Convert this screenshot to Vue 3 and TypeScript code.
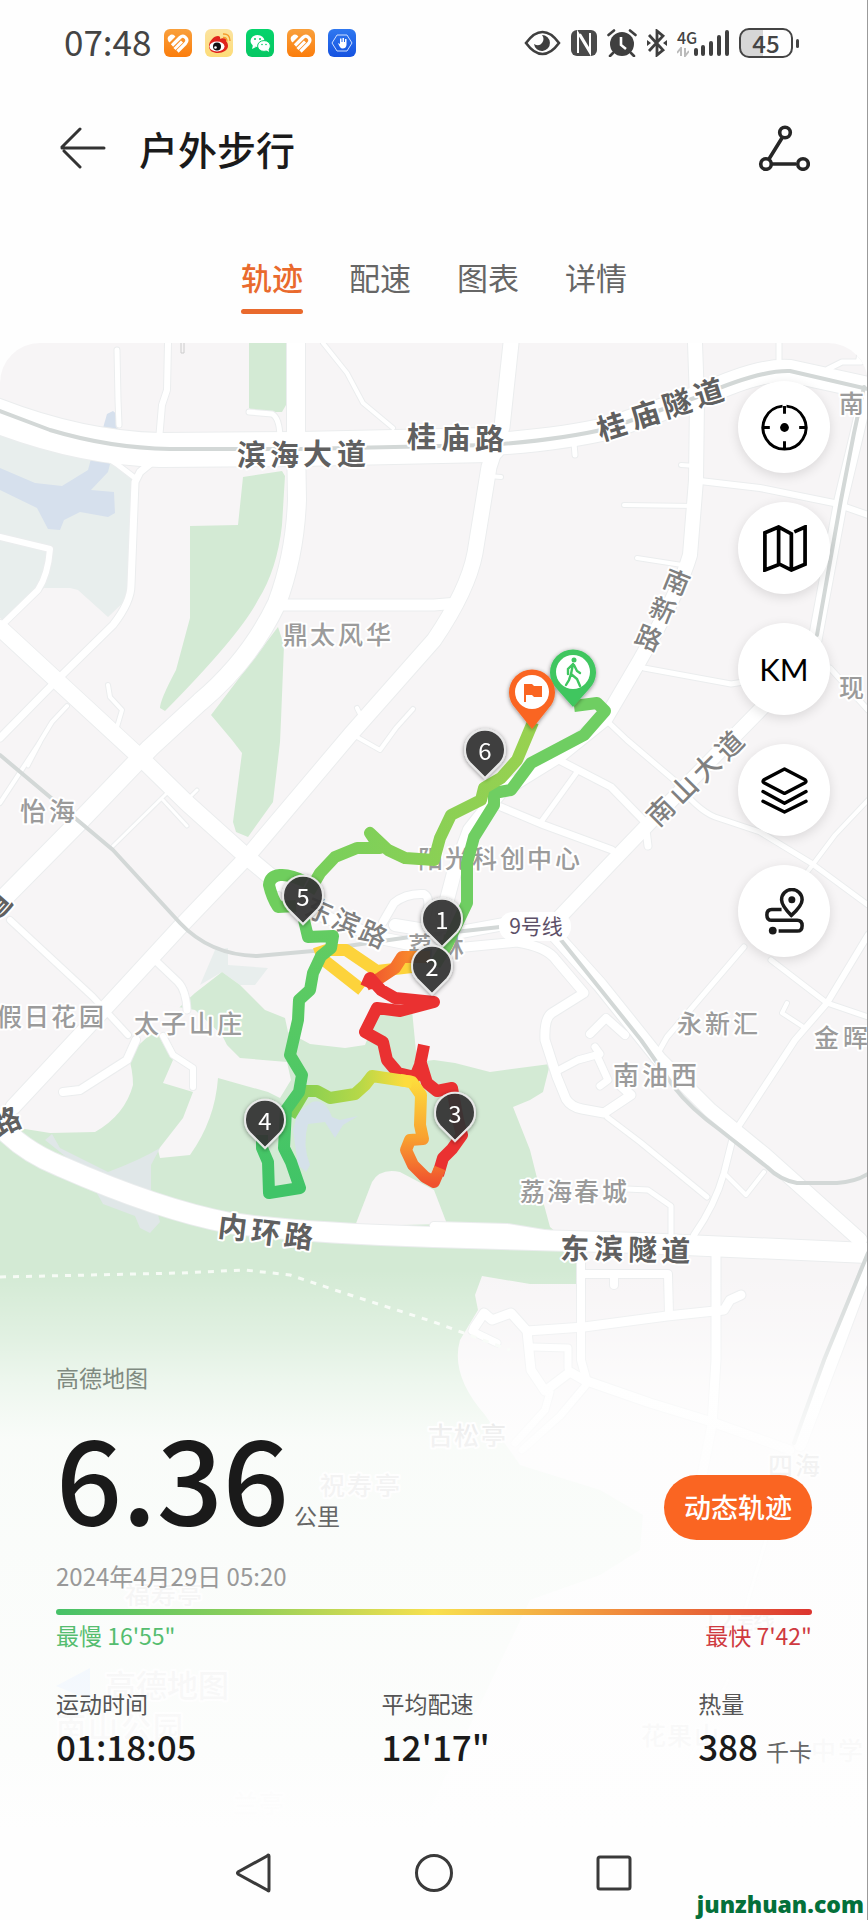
<script setup lang="ts">
import { ref } from 'vue'

interface Road { d: string; w: number }
interface MapLabel {
  text: string
  from: [number, number]
  to: [number, number]
  turn: number
  size: number
  kind: string
}
interface Pin { n: number; x: number; y: number }

const tabs = ['轨迹', '配速', '图表', '详情']
const activeTab = ref(0)

const roads: Road[] = [
  { w: 5, d: 'M117 350 118 400 119 425' },
  { w: 6, d: 'M168 343 167 390 162 405 159 440' },
  { w: 4, d: 'M323 343 347 373 363 403 393 428' },
  { w: 7, d: 'M157 458 140 472 135 482 131 585Q131 602 113 625L60 677 0 738' },
  { w: 4, d: 'M67 706 52 722 38 745 0 803' },
  { w: 6, d: 'M0 537 50 549Q48 575 38 590L5 622' },
  { w: 5, d: 'M92 448 118 465 135 478' },
  { w: 5, d: 'M249 412 272 414Q280 418 280 440' },
  { w: 4, d: 'M108 685 110 697 122 710 117 727' },
  { w: 3, d: 'M40 743 28 766M167 793 113 846M163 800 187 826M197 790 183 804' },
  { w: 6, d: 'M10 920 93 997 128 1035' },
  { w: 7, d: 'M157 962 178 982Q186 990 187 1010' },
  { w: 4, d: 'M357 708 364 722M413 709 396 728 380 750 357 737' },
  { w: 6, d: 'M700 481 760 488 834 503 868 515' },
  { w: 4, d: 'M624 505 695 506M637 558 682 565M681 465 696 466M489 476 501 477' },
  { w: 5, d: 'M644 668 731 684 830 668 868 710M779 343V370M574 443 575 455' },
  { w: 5, d: 'M828 369 842 362 861 362M856 343Q862 352 858 362' },
  { w: 5, d: 'M608 722 627 740 674 780 Q697 810 715 817L760 832 811 863 868 905' },
  { w: 7, d: 'M555 758 611 787 645 822 648 846' },
  { w: 5, d: 'M577 772 541 822' },
  { w: 7, d: 'M501 807 544 825 612 850' },
  { w: 4, d: 'M868 800 835 835 805 875' },
  { w: 5, d: 'M771 960 827 1003 868 1017M744 947 667 1037 654 1060' },
  { w: 6, d: 'M868 935 827 1003 795 1040 734 1133 724 1173Q715 1205 694 1235' },
  { w: 4, d: 'M787 1003 782 1013 802 1026' },
  { w: 9, d: 'M455 948 517 942Q547 947 556 960L584 993 552 1013Q544 1018 545 1040L557 1077 566 1099Q571 1107 582 1109L604 1113 631 1095 620 1085' },
  { w: 7, d: 'M557 1071 578 1060 600 1054 595 1047M598 1058 608 1080 600 1086' },
  { w: 8, d: 'M590 1034 606 1018 625 1035' },
  { w: 5, d: 'M607 1117 640 1142 707 1197' },
  { w: 5, d: 'M627 1189 648 1190 671 1206V1234' },
  { w: 4, d: 'M724 1173 746 1195 764 1172' },
  { w: 8, d: 'M434 1226 507 1228 550 1235' },
  { w: 8, d: 'M581 1253V1360L587 1382' },
  { w: 8, d: 'M584 1274H668L669 1315M614 1275V1285' },
  { w: 9, d: 'M527 1331 584 1327 667 1316 724 1310 730 1300 741 1295' },
  { w: 9, d: 'M716 1253V1360L712 1425 702 1475' },
  { w: 9, d: 'M474 1328 484 1313 492 1320 511 1313 527 1331 531 1370 545 1391 570 1372 584 1380 650 1403 712 1422 790 1450' },
  { w: 7, d: 'M472 1331 497 1343M532 1347 568 1348V1368' },
  { w: 7, d: 'M586 1385 560 1416 522 1450M550 1392 545 1410 515 1443' },
  { w: 8, d: 'M136 1040 127 1060 80 1090 63 1092' },
  { w: 6, d: 'M163 1036 173 1055 193 1068V1087' },
  { w: 8, d: 'M383 922 394 903Q406 893 424 894 432 898 425 920' },
  { w: 12, d: 'M273 878 320 915 380 938 440 950M395 925 450 934 515 922' },
  { w: 34, d: 'M-5 415Q80 448 160 450L300 449 489 445' },
  { w: 22, d: 'M480 445Q560 440 610 428L700 396Q760 368 790 371L868 388' },
  { w: 18, d: 'M296 343 296 440 297 500Q295 555 277 603 250 660 200 702L150 748 78 823 0 902' },
  { w: 16, d: 'M0 628 143 760 187 803 247 857 278 883' },
  { w: 15, d: 'M511 343 502 427 489 467 475 553Q468 590 434 640L350 735 247 857 180 927 110 1003 13 1107' },
  { w: 11, d: 'M278 605H434L458 603' },
  { w: 14, d: 'M695 343 697 400 696 480 690 555Q680 590 640 660L606 718 560 755 500 792 470 830 454 873 443 915' },
  { w: 14, d: 'M555 922 611 863 660 812 760 710 815 655' },
  { w: 13, d: 'M868 385 857 433 841 500 815 640' },
  { w: 14, d: 'M555 935 600 985 660 1060 710 1110 765 1155 860 1240' },
  { w: 12, d: 'M868 1265 840 1340 800 1445' },
  { w: 20, d: 'M-5 1120Q20 1150 60 1166 160 1210 230 1223 300 1233 434 1237L640 1243 868 1253' },
  { w: 3, d: 'M769 1530 745 1610M728 1680 690 1760' },
]

const rails = [
  'M0 411 50 430Q110 448 170 449L300 449 489 445Q560 440 610 428L700 396Q760 370 790 371L868 389',
  'M864 387 854 433 841 500 817 635',
  'M0 755 50 797 113 850 180 923Q210 955 257 956L313 951 410 937 500 927',
  'M561 940 641 1040 674 1087Q690 1108 720 1130L767 1167Q780 1180 797 1183H837Q855 1182 868 1174',
  'M868 1253 824 1360 794 1443',
]

const labels: MapLabel[] = [
  { text: '滨海大道', from: [251, 455], to: [351, 454], turn: 0, size: 29, kind: 'strong' },
  { text: '桂庙路', from: [421, 437], to: [489, 439], turn: 0, size: 29, kind: 'strong' },
  { text: '桂庙隧道', from: [612, 426], to: [709, 392], turn: -17, size: 29, kind: 'strong' },
  { text: '南新路', from: [677, 582], to: [649, 638], turn: 22, size: 26, kind: 'road' },
  { text: '南山大道', from: [660, 811], to: [729, 745], turn: -45, size: 27, kind: 'road' },
  { text: '东滨路', from: [320, 910], to: [374, 934], turn: 24, size: 27, kind: 'road' },
  { text: '东滨隧道', from: [575, 1248], to: [676, 1250], turn: 1, size: 29, kind: 'strong' },
  { text: '内环路', from: [233, 1227], to: [299, 1236], turn: 7, size: 29, kind: 'strong' },
  { text: '路', from: [6, 1121], to: [6, 1121], turn: -24, size: 29, kind: 'strong' },
  { text: '道', from: [-4, 906], to: [-4, 906], turn: -48, size: 29, kind: 'strong' },
  { text: '鼎太风华', from: [295, 634], to: [378, 634], turn: 0, size: 25, kind: 'place' },
  { text: '怡海', from: [33, 811], to: [62, 811], turn: 0, size: 26, kind: 'place' },
  { text: '假日花园', from: [9, 1016], to: [91, 1016], turn: 0, size: 25, kind: 'place' },
  { text: '太子山庄', from: [146, 1023], to: [229, 1023], turn: 0, size: 25, kind: 'place' },
  { text: '阳光科创中心', from: [430, 858], to: [567, 858], turn: 0, size: 25, kind: 'place' },
  { text: '荔林', from: [421, 946], to: [451, 947], turn: 0, size: 26, kind: 'place' },
  { text: '永新汇', from: [689, 1023], to: [745, 1023], turn: 0, size: 25, kind: 'place' },
  { text: '金晖', from: [826, 1037], to: [855, 1037], turn: 0, size: 25, kind: 'place' },
  { text: '南油西', from: [626, 1075], to: [684, 1075], turn: 0, size: 26, kind: 'place' },
  { text: '荔海春城', from: [532, 1191], to: [614, 1191], turn: 0, size: 25, kind: 'place' },
  { text: '南', from: [851, 403], to: [851, 403], turn: 0, size: 25, kind: 'place' },
  { text: '现', from: [851, 687], to: [851, 687], turn: 0, size: 25, kind: 'place' },
  { text: '古松亭', from: [440, 1435], to: [493, 1435], turn: 0, size: 25, kind: 'place' },
  { text: '四海', from: [780, 1465], to: [807, 1465], turn: 0, size: 25, kind: 'place' },
  { text: '祝寿亭', from: [332, 1485], to: [387, 1485], turn: 0, size: 25, kind: 'place' },
  { text: '福寿亭', from: [137, 1594], to: [189, 1594], turn: 0, size: 25, kind: 'place' },
  { text: '12号线', from: [715, 1620], to: [764, 1620], turn: 0, size: 22, kind: 'place' },
  { text: '高德地图', from: [120, 1685], to: [213, 1685], turn: 0, size: 31, kind: 'place' },
  { text: '南山公园', from: [71, 1727], to: [168, 1727], turn: 0, size: 30, kind: 'place' },
  { text: '花果山', from: [653, 1735], to: [706, 1735], turn: 0, size: 25, kind: 'place' },
  { text: '中学', from: [823, 1750], to: [850, 1750], turn: 0, size: 25, kind: 'place' },
  { text: '兰亭', from: [245, 1803], to: [271, 1803], turn: 0, size: 25, kind: 'place' },
]

// Glyph centres are spread evenly from `from` to `to`; each origin is then turned round its centre.
function glyphs(label: MapLabel) {
  const chars = Array.from(label.text)
  const rad = (label.turn * Math.PI) / 180
  const a = label.size / 2
  const b = -label.size * 0.38
  const dx = a * Math.cos(rad) - b * Math.sin(rad)
  const dy = a * Math.sin(rad) + b * Math.cos(rad)
  return chars.map((char, i) => {
    const t = chars.length > 1 ? i / (chars.length - 1) : 0
    return {
      char,
      x: Math.round(label.from[0] + (label.to[0] - label.from[0]) * t - dx),
      y: Math.round(label.from[1] + (label.to[1] - label.from[1]) * t - dy),
    }
  })
}

const placedLabels = labels.map((label) => ({ ...label, glyphs: glyphs(label) }))

const pins: Pin[] = [
  { n: 6, x: 485, y: 752 },
  { n: 5, x: 303, y: 898 },
  { n: 1, x: 442, y: 921 },
  { n: 2, x: 432, y: 968 },
  { n: 3, x: 455, y: 1115 },
  { n: 4, x: 265, y: 1122 },
]

const stats = [
  { label: '运动时间', value: '01:18:05', unit: '' },
  { label: '平均配速', value: '12\'17"', unit: '' },
  { label: '热量', value: '388', unit: '千卡' },
]
</script>

<template>
  <div class="page">
    <header class="status">
      <div class="status-left">
        <span class="clock">07:48</span>
        <svg v-for="n in 5" :key="n" class="app" viewBox="0 0 28 28" aria-hidden="true">
          <defs>
            <linearGradient :id="'app' + n" x1="0" y1="0" x2="0" y2="1">
              <stop offset="0" :stop-color="['#f9a03c', '#fbe3a0', '#06d46c', '#f9a03c', '#2f78f0'][n - 1]" />
              <stop offset="1" :stop-color="['#fb7d0c', '#fddc78', '#06c763', '#fb7d0c', '#1552e0'][n - 1]" />
            </linearGradient>
          </defs>
          <rect width="28" height="28" rx="6" :fill="`url(#app${n})`" />
          <g v-if="n === 1 || n === 4" fill="none" stroke="#fff" stroke-width="3.2" stroke-linejoin="round">
            <path d="M8 16.500 16 8.500Q18.500 6 21 8 24.500 11 21.500 14.500L13.500 22.500" />
            <path d="M10.500 20 18 12.500" stroke-width="3" />
            <path d="M5.500 12.500Q3 9 6 7 8 5.500 10.500 7.500Z" fill="#fff" stroke-width="1.500" />
          </g>
          <g v-else-if="n === 2">
            <path d="M4 17C4 12 9 7 13 7c3 0 2 3 2 3s6-2 6 1c0 2 2 2 2 6s-5 7-10 7-9-2-9-7Z" fill="#e0241c" />
            <ellipse cx="12" cy="17.500" rx="7.500" ry="5" fill="#fff" />
            <circle cx="12" cy="17.500" r="4" fill="#111" />
            <circle cx="10.500" cy="18.500" r="1.300" fill="#fff" />
            <path d="M18 8.500q4-.500 4 4M18 5q7-.500 7 7" fill="none" stroke="#f39a2b" stroke-width="1.400" />
          </g>
          <g v-else-if="n === 3" fill="#fff">
            <ellipse cx="11.500" cy="12" rx="7" ry="6" />
            <path d="m7 16-1 4 4-2Z" />
            <ellipse cx="18" cy="17" rx="6.400" ry="5.400" stroke="#06cc66" stroke-width="1" />
            <path d="m20 21 3 2-.500-3Z" />
            <g fill="#06cc66">
              <circle cx="9" cy="10" r="1" /><circle cx="14" cy="10" r="1" />
              <circle cx="16" cy="15.500" r=".8" /><circle cx="20" cy="15.500" r=".8" />
            </g>
          </g>
          <g v-else>
            <path d="m9 6h10l5 8-5 8H9l-5-8Z" fill="none" stroke="#cfe0ff" stroke-width="1" />
            <path d="M10 14l2 1V9.500h1.500V13h1V9h1.500v4h1v-3h1.500v6q-.500 3.500-4 3.500-2.500 0-4.500-5.500Z" fill="#fff" />
          </g>
        </svg>
      </div>
      <div class="status-right">
        <svg class="s-eye" viewBox="0 0 37 26" aria-hidden="true">
          <path d="M2 13Q10 2 18.500 2T35 13Q27 24 18.500 24T2 13Z" fill="none" stroke="#3f3f3f" stroke-width="2.600" />
          <path d="M18 5a8 8 0 1 1-8 9q5 3 8-1t0-8Z" fill="#3f3f3f" />
        </svg>
        <svg class="s-nfc" viewBox="0 0 26 28" aria-hidden="true">
          <rect y="1" width="26" height="26" rx="6" fill="#4a4a4a" />
          <path d="M7 24V4L19 24V4" fill="none" stroke="#fff" stroke-width="2" />
          <path d="M9 5 18 20" stroke="#fff" stroke-width="2" />
        </svg>
        <svg class="s-alarm" viewBox="0 0 30 28" aria-hidden="true">
          <circle cx="15" cy="15" r="12" fill="#3f3f3f" />
          <path d="M1.500 6 7 1.500M28.500 6 23 1.500M6 24l-3 3M24 24l3 3" stroke="#3f3f3f" stroke-width="2.600" stroke-linecap="round" />
          <path d="M14 8v8l5 4" fill="none" stroke="#fff" stroke-width="2.600" />
        </svg>
        <svg class="s-bt" viewBox="0 0 20 28" aria-hidden="true">
          <path d="M2 6 16 21l-6 5V2l6 5L2 22" fill="none" stroke="#3f3f3f" stroke-width="2.800" />
          <path d="M0 11l4 3-4 3ZM20 11l-4 3 4 3Z" fill="#3f3f3f" />
        </svg>
        <div class="cell">
          <div class="cell-net">
            <span class="net">4G</span>
            <svg class="s-arrows" viewBox="0 0 12 10" aria-hidden="true">
              <path d="M4 9V1L0 6M8 1v8l4-5" fill="none" stroke="#bbb" stroke-width="2" />
            </svg>
          </div>
          <svg class="s-signal" viewBox="0 0 36 28" aria-hidden="true">
            <path d="M3 21v4M10 18v7M18 14v11M26 8v17M34 3v22" stroke="#3f3f3f" stroke-width="4" stroke-linecap="round" />
          </svg>
        </div>
        <div class="battery"><span class="battery-body">45</span><i class="battery-tip"></i></div>
      </div>
    </header>

    <div class="title-bar">
      <button class="plain" type="button" aria-label="返回">
        <svg class="i-back" viewBox="0 0 46 42" aria-hidden="true">
          <path d="M44 21H2M20 2 2 20M4 24 20 40" fill="none" stroke="#333" stroke-width="3" stroke-linecap="round" />
        </svg>
      </button>
      <h1>户外步行</h1>
      <button class="plain share" type="button" aria-label="分享">
        <svg class="i-share" viewBox="0 0 52 46" aria-hidden="true">
          <g fill="none" stroke="#262626" stroke-width="3.600">
            <path d="M11 34 24 13M13 39h25" />
            <circle cx="27" cy="7.500" r="5.300" /><circle cx="8" cy="39" r="5.300" /><circle cx="45" cy="39" r="5.300" />
          </g>
        </svg>
      </button>
    </div>

    <nav class="tabs" role="tablist">
      <button
        v-for="(tab, i) in tabs"
        :key="tab"
        class="tab"
        :class="{ active: i === activeTab }"
        type="button"
        role="tab"
        :aria-selected="i === activeTab"
        @click="activeTab = i"
      >{{ tab }}</button>
    </nav>

    <main class="panel">
      <svg class="map" viewBox="0 343 868 1487" role="img" aria-label="运动轨迹地图">
        <defs>
          <linearGradient id="fade" x1="0" y1="1270" x2="0" y2="1830" gradientUnits="userSpaceOnUse">
            <stop offset="0" stop-color="#fff" stop-opacity="0" />
            <stop offset=".12" stop-color="#fff" stop-opacity=".32" />
            <stop offset=".2" stop-color="#fff" stop-opacity=".6" />
            <stop offset=".3" stop-color="#fefefe" stop-opacity=".88" />
            <stop offset=".6" stop-color="#fefefe" stop-opacity=".92" />
            <stop offset=".85" stop-color="#fefefe" stop-opacity=".95" />
            <stop offset="1" stop-color="#fefefe" />
          </linearGradient>
          <linearGradient id="warm" x1="0" y1="1080" x2="0" y2="1184" gradientUnits="userSpaceOnUse">
            <stop offset="0" stop-color="#fddc3c" />
            <stop offset=".55" stop-color="#f9a230" />
            <stop offset="1" stop-color="#f0512e" />
          </linearGradient>
          <linearGradient id="lime" x1="290" y1="0" x2="405" y2="0" gradientUnits="userSpaceOnUse">
            <stop offset="0" stop-color="#7ccd55" />
            <stop offset=".6" stop-color="#b5d848" />
            <stop offset="1" stop-color="#fddc3c" />
          </linearGradient>
          <linearGradient id="rise" x1="0" y1="1190" x2="0" y2="930" gradientUnits="userSpaceOnUse">
            <stop offset="0" stop-color="#40c467" />
            <stop offset="1" stop-color="#63cc62" />
          </linearGradient>
          <linearGradient id="last" x1="300" y1="0" x2="532" y2="0" gradientUnits="userSpaceOnUse">
            <stop offset="0" stop-color="#76cf5c" />
            <stop offset="1" stop-color="#98d150" />
          </linearGradient>
          <linearGradient id="amber" x1="370" y1="0" x2="425" y2="0" gradientUnits="userSpaceOnUse">
            <stop offset="0" stop-color="#f0552e" />
            <stop offset="1" stop-color="#fb9a2a" />
          </linearGradient>
          <filter id="drop" x="-30%" y="-30%" width="160%" height="160%">
            <feDropShadow dx="0" dy="1" stdDeviation="2" flood-opacity=".45" />
          </filter>
        </defs>

        <rect y="343" width="868" height="1487" fill="#f7f5f6" />
        <path fill="#e8eeed" d="M0 430 100 452 135 478 131 595 108 617 78 590 70 588H44L5 622 0 618Z" />
        <path fill="#e8eeed" d="M200 985 215 950 228 948V965L268 968 255 985 240 985 222 972Z" />
        <g fill="#d6e0ed">
          <path d="M0 468 35 483 62 486 88 470 92 455 111 460 108 472 91 490 114 492 115 513 108 517 80 512 64 520 60 530 48 529 37 508 0 490Z" />
          <path d="M103 428 107 414 113 411 120 417 116 436Z" />
        </g>
        <g fill="#d3ead4">
          <path d="M249 343H287L286 405 282 412 253 412 249 408Z" />
          <path d="M243 477 282 471 285 476 282 525Q277 570 258 600 240 635 165 711L160 708Q160 700 176 670L190 618V526L238 525Z" />
          <path d="M278 627 284 645 281 720 280 742 273 802 248 837 236 832 233 822 242 753 232 740 211 715Z" />
          <path d="M195 993 222 972 240 985 265 1010 285 1018 288 1032 310 1044 345 1048 365 1045 371 1030 378 1005 412 1010 417 1062 434 1060 455 1063 490 1072 550 1064 543 1092 530 1100 513 1107 530 1150 540 1190 550 1227 581 1253V1284H530L482 1276 475 1295 478 1310 460 1340Q450 1375 485 1415L520 1465 600 1490 643 1515 640 1550 600 1575 530 1600 420 1830H0V1125L50 1133 95 1132Q125 1115 133 1085 133 1070 128 1055Z" />
        </g>
        <path fill="#f7f5f6" d="M140 1000 195 1010 222 1035 227 1045 240 1058 287 1062 291 1080 280 1098 268 1092 218 1078Q215 1120 190 1155L160 1158 158 1150 183 1118 193 1092 163 1083 173 1060 160 1035 140 1030Z" />
        <path fill="#f7f5f6" d="M355 1226 372 1182Q380 1168 400 1172L434 1190 447 1224Z" />
        <path fill="#e0e7e8" d="M52 1134 60 1148 108 1172Q140 1160 160 1148L151 1165V1190L160 1222 150 1233 140 1228 135 1216 103 1204 94 1188 70 1160 45 1140Z" />
        <path fill="#d5e1ea" d="M298 1112 312 1102Q325 1098 332 1117L340 1120 358 1116 343 1125 335 1138 325 1122 308 1124Q302 1145 310 1165L306 1172 298 1165 293 1130Z" />

        <g fill="none" stroke-linejoin="round" stroke-linecap="round">
          <path v-for="(r, i) in roads" :key="'c' + i" :d="r.d" stroke="#ebedee" :stroke-width="r.w + 2" />
          <path v-for="(r, i) in roads" :key="'r' + i" :d="r.d" stroke="#fff" :stroke-width="r.w" />
          <path v-for="(d, i) in rails" :key="'t' + i" :d="d" stroke="#d3d8d7" stroke-width="4" />
          <path d="M181 343V353H184V343" stroke="#ccc" stroke-width="1" />
          <path d="M0 1277 180 1273 245 1270 290 1275 350 1295 434 1322 510 1350" stroke="#f6fbf5" stroke-width="3" stroke-dasharray="6 7" stroke-linecap="butt" />
        </g>

        <text
          v-for="label in placedLabels"
          :key="label.text + label.from[0]"
          class="label"
          :class="label.kind"
          :font-size="label.size"
        ><tspan
          v-for="(g, i) in label.glyphs"
          :key="i"
          :x="g.x"
          :y="g.y"
          :rotate="label.turn"
        >{{ g.char }}</tspan></text>
        <rect x="499" y="912" width="72" height="29" rx="14" fill="#fff" />
        <text class="metro" x="536" y="934" text-anchor="middle">9号线</text>
        <path d="M56 1686 90 1668V1700Z" fill="#5fa6f5" />

        <g fill="none" stroke-width="12" stroke-linejoin="round">
          <path stroke="#fdd33b" d="M315 954 327 950H346L377 971 412 967M320 957 362 990" />
          <path stroke="url(#amber)" d="M430 957H402L395 968 380 978 366 985" />
          <path stroke="#ea3131" d="M366 987 370 978 381 990 395 998 434 1002 400 1011 377 1008 365 1032 383 1042 387 1060 398 1073 415 1077 420 1065 424 1045M420 1060 427 1083 437 1091 452 1088 458 1120 462 1135 452 1149 443 1158 438 1175" />
          <path stroke="#6fce62" d="M574 706 597 703 605 711 584 735 531 763 511 790 494 793 494 805 474 837 467 863 467 903 447 945 435 965" />
          <path stroke="url(#warm)" d="M440 1168 434 1182 425 1177 413 1165 406 1150 410 1140 423 1139 420 1125 421 1095 412 1082 400 1080" />
          <path stroke="url(#lime)" d="M412 1082 372 1076 365 1085 355 1094 330 1098 317 1091 305 1091 290 1116" />
          <path stroke="url(#rise)" d="M262 1135V1148L268 1162 269 1193 300 1188 291 1162 284 1148 286 1110 299 1092 302 1075 290 1055 298 1020 299 1000 310 990 313 973 321 956 331 948 333 936 308 937 304 920" />
          <path stroke="#6fce5d" d="M296 906 278 907Q272 898 269 885 270 876 280 875 290 874 306 882" />
          <path stroke="url(#last)" d="M309 892 320 873 335 857 357 848 380 848 370 833 388 850 405 858 434 860 440 838 451 815 481 800 484 788 501 778 517 760 533 722" />
        </g>

        <g v-for="p in pins" :key="p.n" filter="url(#drop)">
          <path
            :d="`M${p.x} ${p.y + 26} l-15 -15 A20 20 0 1 1 ${p.x + 15} ${p.y + 11} Z`"
            fill="#333" fill-opacity=".9" stroke="#e8e8e8" stroke-width="2"
          />
          <text class="pin-no" :x="p.x" :y="p.y + 8" text-anchor="middle">{{ p.n }}</text>
        </g>
        <g filter="url(#drop)">
          <path d="M573 707 557 689A23 23 0 1 1 589 689Z" fill="#3fc65f" />
          <circle cx="573" cy="672" r="17" fill="#fff" />
          <path d="M532 729 516 709A23 23 0 1 1 548 709Z" fill="#fa6522" />
          <circle cx="532" cy="692" r="17" fill="#fff" />
        </g>
        <circle cx="574" cy="660" r="2.500" fill="#3fc65f" />
        <path d="M573 664 571 674 577 679 580 686M571 674 569 680 566 685M573 664 568 669V674M574 665 577 671 580 673" fill="none" stroke="#3fc65f" stroke-width="2.400" stroke-linecap="round" />
        <path d="M524 702V684h8l2 2h8v11h-8l-2-2h-6v7Z" fill="#fa6522" />

        <rect y="1270" width="868" height="560" fill="url(#fade)" />
      </svg>

      <div class="tools">
        <button class="tool" type="button" aria-label="定位">
          <svg class="i-tool" viewBox="0 0 48 48" aria-hidden="true">
            <path d="M26 2.200A22 22 0 1 1 22 2.200M24 2v8M24 38v8M2 24h7M39 24h7" fill="none" stroke="#000" stroke-width="3" />
            <circle cx="24" cy="24" r="4.500" />
          </svg>
        </button>
        <button class="tool" type="button" aria-label="地图类型">
          <svg class="i-tool" viewBox="0 0 48 48" aria-hidden="true">
            <path d="M34 7 45 2V40L31 46 19 40 4 46V8L18 2 31 9V46M18 2V40" fill="none" stroke="#000" stroke-width="3.800" />
          </svg>
        </button>
        <button class="tool km" type="button">KM</button>
        <button class="tool" type="button" aria-label="图层">
          <svg class="i-tool" viewBox="0 0 48 48" aria-hidden="true">
            <path d="M24 2 45 13Q47 15 45 16L24 27 3 16Q1 15 3 13ZM2 25 24 37 46 25M2 35 24 46 46 35" fill="none" stroke="#000" stroke-width="3.400" stroke-linejoin="round" stroke-linecap="round" />
          </svg>
        </button>
        <button class="tool" type="button" aria-label="路线">
          <svg class="i-tool" viewBox="0 0 48 48" aria-hidden="true">
            <path d="M31 28Q21 18 21 12A10.500 10.500 0 0 1 42 12Q42 18 31 28ZM21 22H11Q6 22 6 27.500T11 33H37Q42 33 42 38.500T37 44H18" fill="none" stroke="#1a1a1a" stroke-width="3.600" />
            <circle cx="31.500" cy="12" r="3.600" fill="#1a1a1a" /><circle cx="12" cy="43.500" r="4" fill="#1a1a1a" />
          </svg>
        </button>
      </div>

      <section class="summary">
        <p class="source">高德地图</p>
        <div class="distance-row">
          <p class="distance"><strong>6.36</strong><span>公里</span></p>
          <button class="replay" type="button">动态轨迹</button>
        </div>
        <time class="date" datetime="2024-04-29T05:20">2024年4月29日 05:20</time>
        <div class="scale"></div>
        <div class="pace"><span class="slow">最慢 16'55"</span><span class="fast">最快 7'42"</span></div>
        <dl class="stats">
          <div v-for="s in stats" :key="s.label">
            <dt>{{ s.label }}</dt>
            <dd>{{ s.value }}<small v-if="s.unit">{{ s.unit }}</small></dd>
          </div>
        </dl>
      </section>
    </main>

    <footer class="system-nav">
      <button class="plain" type="button" aria-label="系统返回">
        <svg class="i-nav" viewBox="0 0 40 40" aria-hidden="true"><path d="M35 3V37Q35 39 33 37L4 21Q3 20 4 19L33 3Q35 1 35 3Z" fill="none" stroke="#3a3a3a" stroke-width="3" /></svg>
      </button>
      <button class="plain" type="button" aria-label="主屏幕">
        <svg class="i-nav" viewBox="0 0 40 40" aria-hidden="true"><circle cx="20" cy="20" r="17.500" fill="none" stroke="#3a3a3a" stroke-width="3" /></svg>
      </button>
      <button class="plain" type="button" aria-label="最近任务">
        <svg class="i-nav" viewBox="0 0 40 40" aria-hidden="true"><rect x="4" y="4" width="32" height="32" rx="2" fill="none" stroke="#3a3a3a" stroke-width="3" /></svg>
      </button>
    </footer>
    <span class="site">junzhuan.com</span>
  </div>
</template>

<style>
body {
  margin: 0;
  background: #fefefe;
}
</style>

<style scoped>
.page {
  position: relative;
  overflow: hidden;
  background: #fefefe;
  color: #1a1a1a;
  font-family: "Noto Sans CJK SC", "Noto Sans", sans-serif;
}
.page::after {
  content: "";
  position: absolute;
  top: 0;
  right: 0;
  bottom: 0;
  width: 1px;
  background: #9a9a9a;
}
svg {
  display: block;
}
p, h1, dl, dd {
  margin: 0;
}
button {
  font-family: inherit;
  border: 0;
  padding: 0;
  background: none;
  cursor: pointer;
}
.status {
  display: flex;
  justify-content: space-between;
  align-items: center;
  height: 86px;
  padding: 0 69px 0 64px;
  color: #444;
}
.status-left, .status-right {
  display: flex;
  align-items: center;
}
.status-left {
  gap: 13px;
}
.status-right {
  gap: 10px;
}
.clock {
  font-size: 35px;
  line-height: 40px;
  padding-bottom: 4px;
}
.app {
  width: 28px;
  height: 28px;
}
.s-eye { width: 37px; height: 26px; }
.s-nfc { width: 26px; height: 28px; }
.s-alarm { width: 30px; height: 28px; }
.s-bt { width: 20px; height: 28px; }
.cell {
  display: flex;
  align-items: flex-end;
}
.cell-net {
  display: flex;
  flex-direction: column;
  align-items: flex-start;
  width: 16px;
  gap: 2px;
}
.net {
  font-size: 16px;
  line-height: 16px;
  font-weight: 500;
}
.s-arrows { width: 12px; height: 10px; }
.s-signal { width: 36px; height: 28px; }
.battery {
  display: flex;
  align-items: center;
  gap: 3px;
}
.battery-body {
  width: 50px;
  border: 2px solid #444;
  border-radius: 10px;
  background: linear-gradient(90deg, #d6d6d6 45%, #fefefe 45%);
  font-size: 24px;
  line-height: 26px;
  font-weight: 500;
  text-align: center;
}
.battery-tip {
  width: 3px;
  height: 9px;
  border-radius: 2px;
  background: #444;
}
.title-bar {
  display: flex;
  align-items: center;
  height: 124px;
  padding: 0 58px 0 60px;
}
.i-back { width: 46px; height: 42px; }
.i-share { width: 52px; height: 46px; }
.title-bar h1 {
  margin-left: 33px;
  font-size: 39px;
  line-height: 52px;
  font-weight: 500;
}
.share {
  margin-left: auto;
}
.tabs {
  display: flex;
  justify-content: center;
  gap: 46px;
  height: 104px;
  margin-bottom: 29px;
}
.tab {
  position: relative;
  height: 104px;
  padding-top: 30px;
  color: #666;
  font-size: 31px;
  line-height: 44px;
}
.tab.active {
  color: #e96a2d;
  font-weight: 500;
}
.tab.active::after {
  content: "";
  position: absolute;
  left: 0;
  right: 0;
  bottom: 0;
  height: 5px;
  border-radius: 3px;
  background: #e96a2d;
}
.panel {
  display: grid;
  border-radius: 40px 40px 0 0;
  overflow: hidden;
}
.map, .tools, .summary {
  grid-area: 1 / 1;
}
.map {
  width: 100%;
  height: auto;
}
.label {
  paint-order: stroke;
  stroke: #fff;
  stroke-width: 4px;
  stroke-linejoin: round;
  font-weight: 500;
}
.label.strong {
  fill: #606060;
  font-weight: 700;
}
.label.road {
  fill: #808080;
}
.label.place {
  fill: #9b9b9b;
}
.metro {
  fill: #5d5068;
  font-size: 21px;
}
.pin-no {
  fill: #fff;
  font-size: 24px;
}
.tools {
  position: relative;
  align-self: start;
  justify-self: end;
  display: flex;
  flex-direction: column;
  gap: 29px;
  padding: 38px 38px 0 0;
}
.tool {
  display: flex;
  align-items: center;
  justify-content: center;
  width: 92px;
  height: 92px;
  border-radius: 50%;
  background: #fff;
  box-shadow: 0 3px 12px rgba(0, 0, 0, 0.12);
  color: #000;
}
.i-tool {
  width: 47px;
  height: 47px;
}
.km {
  font-family: Lato, "Noto Sans", sans-serif;
  font-size: 31px;
  line-height: 40px;
}
.summary {
  position: relative;
  align-self: end;
  padding: 0 56px 55px;
}
.source {
  color: #7f8a80;
  font-size: 23px;
  line-height: 32px;
}
.distance-row {
  display: flex;
  align-items: center;
  justify-content: space-between;
  height: 150px;
  margin-top: 6px;
}
.distance {
  display: flex;
  align-items: baseline;
  gap: 5px;
  color: #666;
  font-size: 23px;
}
.distance strong {
  color: #1a1a1a;
  font-size: 116px;
  line-height: 150px;
  font-weight: 500;
}
.replay {
  width: 148px;
  height: 65px;
  border-radius: 33px;
  background: #fa6522;
  color: #fff;
  font-size: 27px;
  line-height: 40px;
  font-weight: 500;
  margin-top: 66px;
}
.date {
  display: block;
  margin-top: 11px;
  color: #999;
  font-size: 24px;
  line-height: 32px;
}
.scale {
  height: 6px;
  margin-top: 17px;
  border-radius: 3px;
  background: linear-gradient(90deg, #46c168, #8fcf5a 25%, #f8e04e 50%, #f08a3c 75%, #dc3530);
}
.pace {
  display: flex;
  justify-content: space-between;
  margin-top: 4px;
  font-size: 23px;
  line-height: 32px;
}
.slow {
  color: #55bd6f;
}
.fast {
  color: #cf3a40;
}
.stats {
  display: grid;
  grid-template-columns: 326fr 317fr auto;
  margin-top: 36px;
}
.stats dt {
  color: #555;
  font-size: 23px;
  line-height: 32px;
}
.stats dd {
  margin-top: 3px;
  font-size: 35px;
  line-height: 48px;
  font-weight: 500;
}
.stats small {
  margin-left: 8px;
  color: #666;
  font-size: 23px;
  font-weight: 400;
}
.system-nav {
  display: flex;
  justify-content: center;
  gap: 140px;
  padding: 23px 0 27px;
}
.i-nav {
  width: 40px;
  height: 40px;
}
.site {
  position: absolute;
  right: 4px;
  bottom: 2px;
  color: #04703a;
  font-family: "Open Sans", "Noto Sans", sans-serif;
  font-size: 23px;
  line-height: 28px;
  font-weight: 800;
}
</style>
